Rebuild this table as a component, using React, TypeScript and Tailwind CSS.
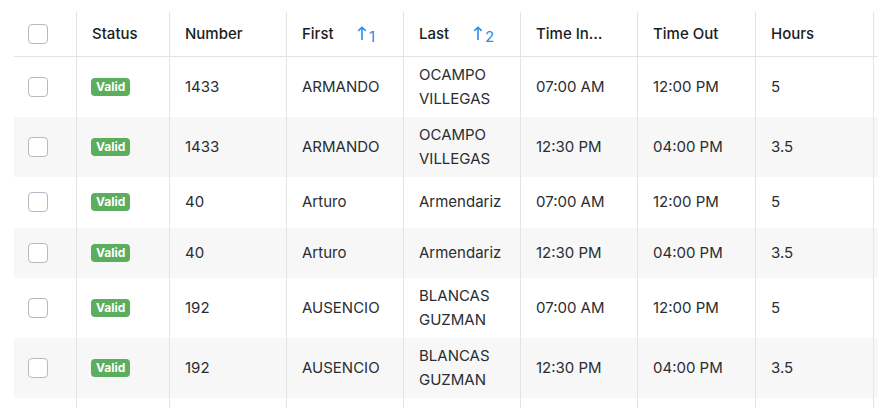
import React from "react";

type Row = {
  number: string;
  first: string;
  last: string[];
  tin: string;
  tout: string;
  hours: string;
};

const rows: Row[] = [
  { number: "1433", first: "ARMANDO", last: ["OCAMPO", "VILLEGAS"], tin: "07:00 AM", tout: "12:00 PM", hours: "5" },
  { number: "1433", first: "ARMANDO", last: ["OCAMPO", "VILLEGAS"], tin: "12:30 PM", tout: "04:00 PM", hours: "3.5" },
  { number: "40", first: "Arturo", last: ["Armendariz"], tin: "07:00 AM", tout: "12:00 PM", hours: "5" },
  { number: "40", first: "Arturo", last: ["Armendariz"], tin: "12:30 PM", tout: "04:00 PM", hours: "3.5" },
  { number: "192", first: "AUSENCIO", last: ["BLANCAS", "GUZMAN"], tin: "07:00 AM", tout: "12:00 PM", hours: "5" },
  { number: "192", first: "AUSENCIO", last: ["BLANCAS", "GUZMAN"], tin: "12:30 PM", tout: "04:00 PM", hours: "3.5" },
];

const grid =
  "grid grid-cols-[62px_93px_117px_117px_117px_117px_118px_118px_200px]";

function Checkbox() {
  return <div className="h-5 w-5 rounded-[4px] border border-[#b3bac2] bg-white" />;
}

function SortIcon({ n }: { n: string }) {
  return (
    <span className="flex items-end font-normal text-[#2f8be6]">
      <svg width="8" height="14" viewBox="0 0 8 14" fill="none" className="mb-[3px]">
        <path d="M4 13.5V1.2M0.8 4.4L4 1.2L7.2 4.4" stroke="#2f8be6" strokeWidth="1.6" strokeLinecap="round" strokeLinejoin="round" />
      </svg>
      <span className="ml-[3px] text-[15px] leading-none translate-y-[1px]">{n}</span>
    </span>
  );
}

function HeadCell({ children }: { children?: React.ReactNode }) {
  return (
    <div className="flex items-center border-l border-[#e2e4e7] pl-[15px] font-medium text-[#1a1d21]">
      {children}
    </div>
  );
}

function Cell({ children }: { children?: React.ReactNode }) {
  return (
    <div className="flex items-center border-l border-[#e2e4e7] pl-[15px] py-[6px]">
      <div className="leading-6">{children}</div>
    </div>
  );
}

export default function App() {
  return (
    <div
      className="flex h-[408px] w-[878px] flex-col overflow-hidden bg-white pl-[14px] pt-3 text-[15px] text-[#2a2d31]"
      style={{ fontFamily: "Inter, 'Noto Sans', sans-serif" }}
    >
      <div className={`${grid} h-[45px] shrink-0 border-b border-[#e2e4e7]`}>
        <div className="flex items-center pl-[14px]">
          <Checkbox />
        </div>
        <HeadCell>Status</HeadCell>
        <HeadCell>Number</HeadCell>
        <HeadCell>
          <span className="w-[56px]">First</span>
          <SortIcon n="1" />
        </HeadCell>
        <HeadCell>
          <span className="w-[55px]">Last</span>
          <SortIcon n="2" />
        </HeadCell>
        <HeadCell>
          <span>Time In…</span>
        </HeadCell>
        <HeadCell>Time Out</HeadCell>
        <HeadCell>Hours</HeadCell>
        <HeadCell />
      </div>
      {rows.map((r, i) => (
        <div
          key={i}
          className={`${grid} min-h-[50.5px] shrink-0 ${i % 2 === 1 ? "bg-[#f7f7f7]" : "bg-white"}`}
        >
          <div className="flex items-center pl-[14px]">
            <Checkbox />
          </div>
          <div className="flex items-center border-l border-[#e2e4e7] pl-[14px]">
            <span className="rounded-[4px] bg-[#5aae5d] px-[5px] text-[12px] font-bold leading-[18px] text-white">
              Valid
            </span>
          </div>
          <Cell>{r.number}</Cell>
          <Cell>{r.first}</Cell>
          <Cell>
            {r.last.map((l) => (
              <div key={l}>{l}</div>
            ))}
          </Cell>
          <Cell>{r.tin}</Cell>
          <Cell>{r.tout}</Cell>
          <Cell>{r.hours}</Cell>
          <Cell />
        </div>
      ))}
      <div className={`${grid} flex-1`}>
        <div />
        <div className="border-l border-[#e2e4e7]" />
        <div className="border-l border-[#e2e4e7]" />
        <div className="border-l border-[#e2e4e7]" />
        <div className="border-l border-[#e2e4e7]" />
        <div className="border-l border-[#e2e4e7]" />
        <div className="border-l border-[#e2e4e7]" />
        <div className="border-l border-[#e2e4e7]" />
        <div className="border-l border-[#e2e4e7]" />
      </div>
    </div>
  );
}
